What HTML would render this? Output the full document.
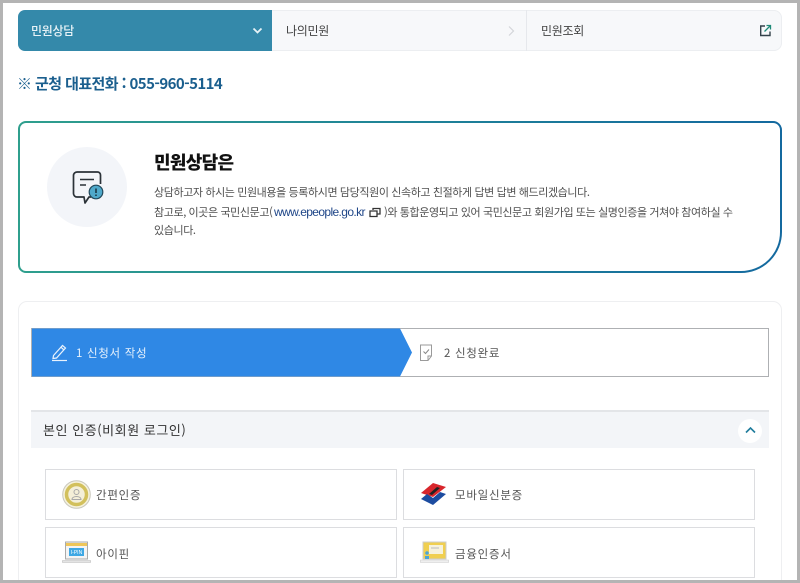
<!DOCTYPE html>
<html lang="ko"><head><meta charset="utf-8"><title>민원상담</title>
<style>
html,body{margin:0;padding:0;background:#fff}
#p{position:relative;width:800px;height:583px;overflow:hidden;background:#fff;font-family:"Liberation Sans","Noto Sans CJK KR",sans-serif;color:#333}
#p div,#p svg{position:absolute}
.t{white-space:nowrap;line-height:1;filter:blur(.25px)}
.btn{background:#fff;border:1px solid #dcdde0;box-sizing:border-box;width:352px;height:51px}
.bl{font-size:11.5px;color:#555;letter-spacing:.75px;font-family:"Noto Sans CJK KR",sans-serif}
.b{font-size:11px;color:#4f4f4f;letter-spacing:-.39px;font-family:"Noto Sans CJK KR",sans-serif}
</style></head><body><div id="p">

<!-- tabs -->
<div style="left:18px;top:10px;width:764px;height:41px;background:#f7f8fa;border-radius:8px;box-shadow:inset 0 0 0 1px #eceef1"></div>
<div style="left:18px;top:10px;width:254px;height:41px;background:#3489aa;border-radius:7px 0 0 7px"></div>
<div style="left:526px;top:10px;width:1px;height:41px;background:#e6e8ec"></div>
<div class="t" style="left:31px;top:25px;font-size:12px;color:#e8f3f7;font-weight:500;letter-spacing:-.3px;font-family:'Noto Sans CJK KR',sans-serif">민원상담</div>
<div class="t" style="left:286px;top:25px;font-size:12px;color:#444;letter-spacing:-.3px;font-family:'Noto Sans CJK KR',sans-serif">나의민원</div>
<div class="t" style="left:541px;top:25px;font-size:12px;color:#444;letter-spacing:-.3px;font-family:'Noto Sans CJK KR',sans-serif">민원조회</div>
<svg style="left:252px;top:27px" width="11" height="8" viewBox="0 0 11 8"><path d="M1.500 1.500 5.500 5.500 9.500 1.500" fill="none" stroke="#e6f2f6" stroke-width="1.800"/></svg>
<svg style="left:507px;top:25px" width="9" height="12" viewBox="0 0 9 12"><path d="M2 1.500 6.500 6 2 10.500" fill="none" stroke="#d3d5d9" stroke-width="1.200"/></svg>
<svg style="left:759px;top:24px" width="13" height="13" viewBox="0 0 13 13"><path d="M6 2H1.700V11.500H11V7.500" fill="none" stroke="#33414a" stroke-width="1.400"/><path d="M5.500 7.500 11 2M7.500 1.500H11.500V5.500" fill="none" stroke="#1f8a78" stroke-width="1.300"/></svg>

<!-- phone -->
<div class="t" style="left:17px;top:76px;font-size:15px;font-weight:700;color:#1b5f8e;letter-spacing:-.58px;font-family:'Noto Sans CJK KR',sans-serif">※ 군청 대표전화 : 055-960-5114</div>

<!-- info card -->
<svg style="left:17px;top:120px" width="766" height="154" viewBox="0 0 766 154">
<defs><linearGradient id="g" x1="0" y1="0" x2="1" y2="0"><stop offset="0" stop-color="#2f9f8d"/><stop offset=".5" stop-color="#1f8397"/><stop offset="1" stop-color="#14699f"/></linearGradient></defs>
<path d="M9 2H756a8 8 0 0 1 8 8V112a40 40 0 0 1-40 40H9a7 7 0 0 1-7-7V9a7 7 0 0 1 7-7Z" fill="#fff" stroke="url(#g)" stroke-width="2"/>
</svg>
<div style="left:47px;top:147px;width:80px;height:80px;border-radius:50%;background:#f3f5f9"></div>
<svg style="left:72px;top:170px" width="34" height="35" viewBox="0 0 34 35">
<path d="M28.500 14V5A3 3 0 0 0 25.500 2H5A3.500 3.500 0 0 0 1.500 5.500V23.500A3.500 3.500 0 0 0 5 27H12L13 33 17 27H19" fill="none" stroke="#2b3238" stroke-width="1.700" stroke-linejoin="round"/>
<path d="M8 9.500H22M8 15H14" stroke="#2b3238" stroke-width="1.500" fill="none"/>
<circle cx="24" cy="22" r="6.800" fill="#4fa9cb" stroke="#22485a" stroke-width="1.200"/>
<path d="M24 18.500V23M24 24.500V26" stroke="#17303c" stroke-width="1.500"/>
</svg>
<div class="t" style="left:154px;top:153px;font-size:18px;font-weight:900;color:#111;letter-spacing:-.7px;font-family:'Noto Sans CJK KR',sans-serif">민원상담은</div>
<div class="t b" style="left:154px;top:187px">상담하고자 하시는 민원내용을 등록하시면 담당직원이 신속하고 친절하게 답변 답변 해드리겠습니다.</div>
<div class="t b" style="left:154px;top:207px">참고로, 이곳은 국민신문고(</div>
<div class="t" style="left:274px;top:206px;font-size:12px;color:#1f4688;letter-spacing:-.62px;font-family:'Liberation Sans',sans-serif">www.epeople.go.kr</div>
<svg style="left:369px;top:207px" width="12" height="11" viewBox="0 0 12 11"><path d="M4 3V1.500H11V7H8M1 4H8V9.500H1Z" fill="none" stroke="#333" stroke-width="1.300"/></svg>
<div class="t b" style="left:384px;top:207px">)와 통합운영되고 있어 국민신문고 회원가입 또는 실명인증을 거쳐야 참여하실 수</div>
<div class="t b" style="left:154px;top:225px">있습니다.</div>

<!-- panel -->
<div style="left:18px;top:301px;width:764px;height:300px;box-sizing:border-box;border:1.500px solid #eeeff1;border-radius:9px;background:#fff"></div>

<!-- steps -->
<div style="left:31px;top:328px;width:738px;height:49px;box-sizing:border-box;border:1px solid #aeb0b3;background:#fff"></div>
<svg style="left:31px;top:328px" width="382" height="49" viewBox="0 0 382 49"><path d="M1 0.500H369L381 24.500 369 48.500H1Z" fill="#2f88e5"/></svg>
<svg style="left:50px;top:343px" width="19" height="19" viewBox="0 0 19 19"><path d="M3.500 12.500 12.500 2.500 15.500 5 6.500 15 3 15.500ZM11 4.200 14 7" fill="none" stroke="#e8f2fd" stroke-width="1.200"/><path d="M2 17.500H17" stroke="#e8f2fd" stroke-width="1.200"/></svg>
<div class="t" style="left:76px;top:348px;font-size:11.500px;color:#e6f1fc;letter-spacing:.7px;font-family:'Noto Sans CJK KR',sans-serif">1 신청서 작성</div>
<svg style="left:419px;top:344px" width="15" height="18" viewBox="0 0 15 18"><path d="M1.500 1H12.500V12L9 16.500H1.500ZM12.500 12H9V16.500" fill="none" stroke="#9a9a9a" stroke-width="1"/><path d="M4.500 7.500 6.500 9.500 10 5.500" fill="none" stroke="#888" stroke-width="1"/></svg>
<div class="t" style="left:444px;top:348px;font-size:11.500px;color:#555;letter-spacing:.7px;font-family:'Noto Sans CJK KR',sans-serif">2 신청완료</div>

<!-- accordion -->
<div style="left:31px;top:410px;width:738px;height:38px;background:#f3f5f8;border-top:2px solid #e3e5e8;box-sizing:border-box"></div>
<div class="t" style="left:43px;top:423px;font-size:13px;color:#333;letter-spacing:.55px;font-family:'Noto Sans CJK KR',sans-serif">본인 인증(비회원 로그인)</div>
<div style="left:738px;top:419px;width:24px;height:24px;border-radius:50%;background:#fff"></div>
<svg style="left:745px;top:426px" width="11" height="8" viewBox="0 0 11 8"><path d="M1 6.500 5.500 2 10 6.500" fill="none" stroke="#1f7c9c" stroke-width="1.600"/></svg>

<!-- auth buttons -->
<div class="btn" style="left:45px;top:469px"></div>
<div class="btn" style="left:403px;top:469px"></div>
<div class="btn" style="left:45px;top:527px"></div>
<div class="btn" style="left:403px;top:527px"></div>
<svg style="left:62px;top:480px" width="29" height="29" viewBox="0 0 29 29"><circle cx="14.500" cy="14.500" r="13.800" fill="#f5f1dc" stroke="#c9c8bd" stroke-width="1"/><circle cx="14.500" cy="14.500" r="10" fill="#f4efd8" stroke="#d2c05c" stroke-width="3.500"/><circle cx="14.500" cy="12" r="2.500" fill="none" stroke="#a9a9a9"/><path d="M10 19.500C10 15.500 19 15.500 19 19.500Z" fill="none" stroke="#a9a9a9"/></svg>
<div class="t bl" style="left:96px;top:490px">간편인증</div>
<svg style="left:420px;top:482px" width="27" height="24" viewBox="0 0 27 24"><path d="M1 11 13 1 26 5 13 15Z" fill="#d8262c"/><path d="M9 12 17 5 20 6 12 13Z" fill="#222"/><path d="M1 17 7 12 13 16 20 10 26 12 13 23Z" fill="#1c4ca0"/></svg>
<div class="t bl" style="left:455px;top:490px">모바일신분증</div>
<svg style="left:62px;top:541px" width="29" height="23" viewBox="0 0 29 23"><rect x="3.500" y="1" width="22" height="17" fill="#f4f4f4" stroke="#aaa" stroke-width="1"/><rect x="4" y="2" width="21" height="3" fill="#eec65a"/><rect x="7" y="7" width="15" height="8" fill="#3fa8e4"/><text x="14.500" y="13" font-size="5" fill="#fff" text-anchor="middle" font-family="Liberation Sans">I-PIN</text><path d="M0.500 19.500H28.500V21.500H0.500Z" fill="#e4e4e4" stroke="#bbb" stroke-width=".6"/></svg>
<div class="t bl" style="left:96px;top:549px">아이핀</div>
<svg style="left:420px;top:541px" width="29" height="23" viewBox="0 0 29 23"><rect x="3" y="1" width="23" height="17" fill="#f0cf50" stroke="#ccc" stroke-width="1"/><rect x="9" y="4" width="14" height="9" fill="#f6f2dc"/><path d="M11 7H19" stroke="#bbb"/><circle cx="7" cy="12" r="1.800" fill="#4aa5d8"/><path d="M5 18V15H9V18Z" fill="#4aa5d8"/><path d="M0.500 19H28.500V21.500H0.500Z" fill="#efefef" stroke="#ccc" stroke-width=".6"/></svg>
<div class="t bl" style="left:455px;top:549px">금융인증서</div>

<!-- screenshot frame -->
<div style="left:0;top:0;width:800px;height:3px;background:#b4b4b4"></div>
<div style="left:0;top:580px;width:800px;height:3px;background:#b4b4b4"></div>
<div style="left:0;top:0;width:3px;height:583px;background:#b4b4b4"></div>
<div style="left:797px;top:0;width:3px;height:583px;background:#b4b4b4"></div>
</div></body></html>
